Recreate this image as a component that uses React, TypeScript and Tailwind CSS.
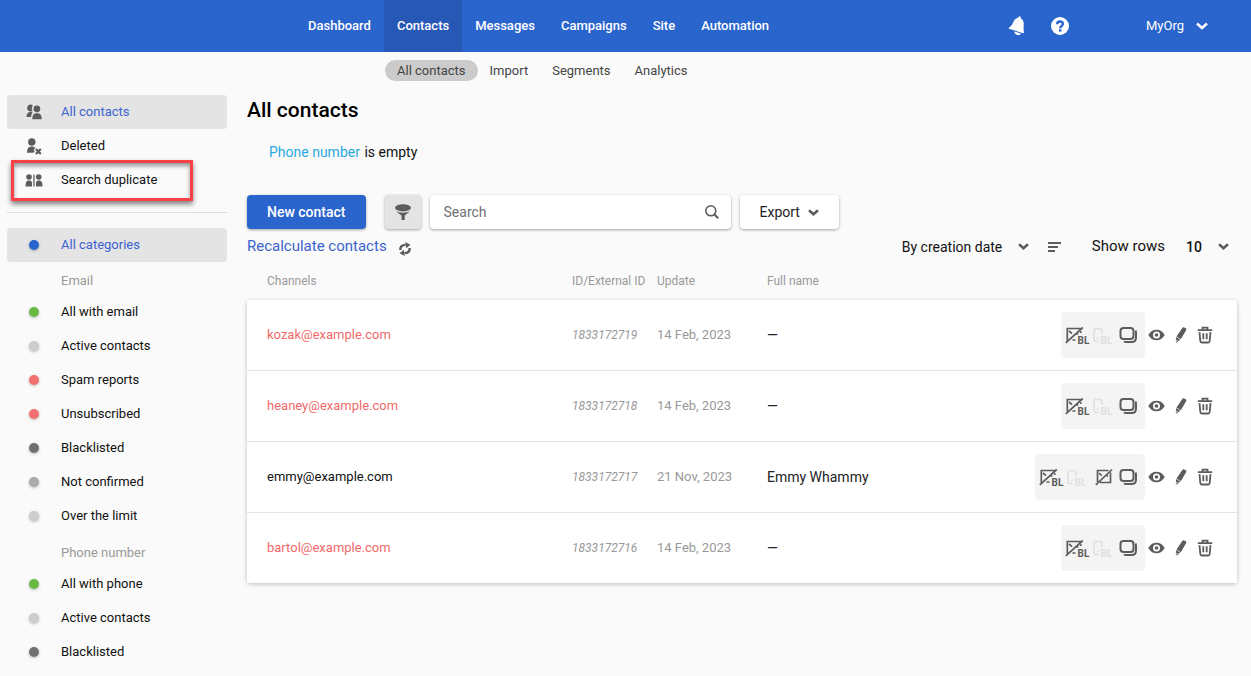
import { useState } from 'react'
import type { ReactNode } from 'react'

type Contact = {
  id: string
  email: string
  updated: string
  name: string
  invalid: boolean
  hasNote: boolean
}

type Category = {
  label: string
  dot: string
}

const navItems = ['Dashboard', 'Contacts', 'Messages', 'Campaigns', 'Site', 'Automation']
const subItems = ['All contacts', 'Import', 'Segments', 'Analytics']

const emailCategories: Category[] = [
  { label: 'All with email', dot: 'bg-[#67bb45]' },
  { label: 'Active contacts', dot: 'bg-[#cccccc]' },
  { label: 'Spam reports', dot: 'bg-[#f37070]' },
  { label: 'Unsubscribed', dot: 'bg-[#f37070]' },
  { label: 'Blacklisted', dot: 'bg-[#707070]' },
  { label: 'Not confirmed', dot: 'bg-[#aaaaaa]' },
  { label: 'Over the limit', dot: 'bg-[#cccccc]' },
]

const phoneCategories: Category[] = [
  { label: 'All with phone', dot: 'bg-[#67bb45]' },
  { label: 'Active contacts', dot: 'bg-[#cccccc]' },
  { label: 'Blacklisted', dot: 'bg-[#707070]' },
]

const contacts: Contact[] = [
  { id: '1833172719', email: 'kozak@example.com', updated: '14 Feb, 2023', name: '', invalid: true, hasNote: false },
  { id: '1833172718', email: 'heaney@example.com', updated: '14 Feb, 2023', name: '', invalid: true, hasNote: false },
  { id: '1833172717', email: 'emmy@example.com', updated: '21 Nov, 2023', name: 'Emmy Whammy', invalid: false, hasNote: true },
  { id: '1833172716', email: 'bartol@example.com', updated: '14 Feb, 2023', name: '', invalid: true, hasNote: false },
]

export default function App() {
  const [search, setSearch] = useState('')

  return (
    <div className="min-h-screen bg-[#fafafa] font-['Roboto',sans-serif] text-[13px] leading-5 text-black">
      <Header />
      <div className="flex items-start pr-3.5 pl-[7px]">
        <Sidebar />
        <main className="ml-5 min-w-0 flex-1 pt-[15px]">
          <h1 className="text-[21px] leading-7 font-medium">All contacts</h1>
          <p className="mt-[18px] pl-[22px] text-sm text-[#111]">
            <a href="#phone" className="mr-px text-[#29a9e0]">Phone number</a> is empty
          </p>

          {/* Toolbar */}
          <div className="mt-[33px] flex h-[34px] items-stretch gap-[9px]">
            <button className="mr-2.5 rounded bg-[#2a64cd] px-5 text-sm font-medium whitespace-nowrap text-white shadow-[0_1px_3px_rgba(0,0,0,0.35)]">
              New contact
            </button>
            <button aria-label="Filter" className="flex w-9 items-center justify-center rounded bg-[#e4e4e4] shadow-[0_1px_3px_rgba(0,0,0,0.35)]">
              <FunnelIcon />
            </button>
            <label className="flex w-[301px] items-center rounded bg-white pr-3 pl-3.5 shadow-[0_1px_3px_rgba(0,0,0,0.35)]">
              <input
                type="text"
                aria-label="Search"
                placeholder="Search"
                value={search}
                onChange={e => setSearch(e.target.value)}
                className="min-w-0 flex-1 text-sm outline-none placeholder:text-[#707070]"
              />
              <SearchIcon />
            </label>
            <button className="flex items-center gap-2 rounded bg-white px-5 text-sm text-[#222] shadow-[0_1px_3px_rgba(0,0,0,0.35)]">
              Export
              <Chevron />
            </button>
          </div>

          {/* Sorting and paging */}
          <div className="mt-[7px] flex items-center justify-between text-sm text-[#111]">
            <a href="#recalculate" className="flex items-center gap-3 text-[15px] text-[#3c62cf]">
              Recalculate contacts
              <RefreshIcon />
            </a>
            <div className="flex items-center pr-2">
              <DropDown label="Sort by" options={['By creation date', 'By update date']} className="w-[127px]" />
              <button aria-label="Sort direction" className="ml-[19px]">
                <SortIcon />
              </button>
              <span className="mr-[21px] ml-[31px] text-[15px]">Show rows</span>
              <DropDown label="Show rows" options={['10', '25', '50']} className="w-[43px] font-medium" />
            </div>
          </div>

          <ContactsTable />
        </main>
      </div>
    </div>
  )
}

function Header() {
  return (
    <>
      <header className="flex h-[52px] bg-[#2a64cd] pl-[295px] font-medium text-white">
        <nav className="flex">
          {navItems.map(item => (
            <a
              key={item}
              href={`#${item}`}
              className={`flex items-center px-[13px] ${item === 'Contacts' ? 'bg-[#2758b6]' : ''}`}
            >
              {item}
            </a>
          ))}
        </nav>
        <div className="ml-auto flex items-center pr-[43px]">
          <button aria-label="Notifications" className="mr-[25px]">
            <BellIcon />
          </button>
          <button aria-label="Help" className="mr-[77px]">
            <HelpIcon />
          </button>
          <button className="flex items-center gap-3 font-normal">
            MyOrg
            <svg width="12" height="8" viewBox="0 0 12 8" fill="none" stroke="currentColor" strokeWidth="2.6">
              <path d="M1 1.5 6 6l5-4.500" />
            </svg>
          </button>
        </div>
      </header>
      <nav className="flex pt-2 pl-[385px] text-[#444]">
        {subItems.map(item => (
          <a
            key={item}
            href={`#${item}`}
            className={`rounded-full px-3 leading-[21px] ${item === 'All contacts' ? 'bg-[#cbcbcb]' : ''}`}
          >
            {item}
          </a>
        ))}
      </nav>
    </>
  )
}

function Sidebar() {
  return (
    <aside className="w-[220px] shrink-0 pt-3.5">
      <SideRow label="All contacts" active icon={<PeopleIcon />} />
      <SideRow label="Deleted" icon={<PersonRemoveIcon />} />
      <div className="relative">
        <SideRow label="Search duplicate" icon={<DuplicateIcon />} />
        <div className="pointer-events-none absolute -top-[3px] left-1 h-[41px] w-[182px] border-3 border-[#fa4145] shadow-[0_3px_5px_rgba(0,0,0,0.5),inset_0_3px_4px_rgba(0,0,0,0.4)]" />
      </div>
      <hr className="mt-[15px] mb-[15px] border-[#dedede]" />
      <SideRow label="All categories" active icon={<Dot color="bg-[#2a64cd]" />} />
      <SideHeading>Email</SideHeading>
      <div className="pb-px">
        {emailCategories.map(c => (
          <SideRow key={c.label} label={c.label} icon={<Dot color={c.dot} />} />
        ))}
      </div>
      <SideHeading>Phone number</SideHeading>
      {phoneCategories.map(c => (
        <SideRow key={c.label} label={c.label} icon={<Dot color={c.dot} />} />
      ))}
    </aside>
  )
}

function SideRow({ label, icon, active = false }: { label: string; icon: ReactNode; active?: boolean }) {
  return (
    <a
      href={`#${label}`}
      className={`flex h-[34px] items-center rounded ${active ? 'bg-[#e4e4e4] text-[#3c62cf]' : 'text-[#111]'}`}
    >
      <span className="flex w-[54px] justify-center text-[#5c5c5c]">{icon}</span>
      {label}
    </a>
  )
}

function SideHeading({ children }: { children: ReactNode }) {
  return <h2 className="pt-[9px] pb-1 pl-[54px] text-[#999]">{children}</h2>
}

function Dot({ color }: { color: string }) {
  return <span className={`size-2.5 rounded-full shadow-[0_1px_3px_rgba(0,0,0,0.25)] ${color}`} />
}

function DropDown({ label, options, className }: { label: string; options: string[]; className: string }) {
  return (
    <span className="relative flex items-center">
      <select aria-label={label} className={`appearance-none outline-none ${className}`}>
        {options.map(o => (
          <option key={o}>{o}</option>
        ))}
      </select>
      <span className="pointer-events-none absolute right-0">
        <Chevron />
      </span>
    </span>
  )
}

function ContactsTable() {
  return (
    <table className="mt-[11px] w-full table-fixed border-separate border-spacing-0 text-left">
      <thead className="text-xs text-[#999]">
        <tr className="h-8">
          <th className="w-[305px] pb-1.5 pl-5 font-normal">Channels</th>
          <th className="w-[97px] pb-1.5 pl-5 font-normal whitespace-nowrap">ID/External ID</th>
          <th className="w-[98px] pb-1.5 pl-2 font-normal">Update</th>
          <th className="pb-1.5 pl-5 font-normal">Full name</th>
          <th className="w-[220px]" aria-label="Actions" />
        </tr>
      </thead>
      <tbody className="rounded bg-white shadow-[0_1px_4px_rgba(0,0,0,0.25)]">
        {contacts.map((c, i) => (
          <tr
            key={c.id}
            className={i < contacts.length - 1 ? 'h-[71px] *:border-b *:border-[#e4e4e4]' : 'h-[70px]'}
          >
            <td className="pl-5">
              <a href={`#${c.id}`} className={c.invalid ? 'text-[#f16a6a]' : 'text-[#111]'}>{c.email}</a>
            </td>
            <td className="pl-5 text-xs text-[#999] italic">{c.id}</td>
            <td className="pl-2 whitespace-nowrap text-[#999]">{c.updated}</td>
            <td className="pl-5 text-sm text-[#222]">{c.name || '—'}</td>
            <td className="pr-6">
              <div className="flex items-center justify-end text-[#5c5c5c]">
                <div className="flex h-[46px] items-center rounded bg-[#f4f4f4] px-1">
                  <MailBlockedIcon />
                  <PhoneBlockedIcon />
                  {c.hasNote && <MailOffIcon />}
                  <CopiesIcon />
                </div>
                <button aria-label={`View ${c.email}`} className="ml-[3px]">
                  <EyeIcon />
                </button>
                <button aria-label={`Edit ${c.email}`} className="ml-2.5">
                  <PencilIcon />
                </button>
                <button aria-label={`Delete ${c.email}`} className="ml-2.5">
                  <TrashIcon />
                </button>
              </div>
            </td>
          </tr>
        ))}
      </tbody>
    </table>
  )
}

/* Icons */

function Chevron() {
  return (
    <svg width="11" height="7" viewBox="0 0 11 7" fill="none" stroke="#5c5c5c" strokeWidth="2.5">
      <path d="M1 1.3 5.5 5.3 10 1.3" />
    </svg>
  )
}

function BellIcon() {
  return (
    <svg width="18" height="20" viewBox="0 0 18 20" fill="currentColor">
      <path d="M10.3 1.6 11.4.3l1.3.4.1 1.700c2 1 3 2.800 2.900 5.400-.1 3.600-.3 5.900.3 8.600l-.7.8L.900 12.800l.1-1.300c2.200-1.200 3.200-2.700 4.200-5.200C6.200 3.700 7.700 2.200 10.300 1.600Z" />
      <path d="m6.200 15.500 6.800 1.900c-.9 1.500-2.100 2-3.700 1.600-1.700-.5-2.800-1.600-3.100-3.500Z" />
    </svg>
  )
}

function HelpIcon() {
  return (
    <svg width="18" height="18" viewBox="0 0 18 18">
      <circle cx="9" cy="9" r="9" fill="currentColor" />
      <path d="M6.1 7.200C6.100 5.400 7.300 4.500 9 4.500s2.900.9 2.900 2.500c0 2-2.700 2-2.700 4.200" fill="none" stroke="#2a64cd" strokeWidth="2.300" />
      <rect x="8" y="12.200" width="2.400" height="2.400" fill="#2a64cd" />
    </svg>
  )
}

function PeopleIcon() {
  return (
    <svg width="16" height="16" viewBox="0 0 16 16" fill="currentColor">
      <path d="M4.600.5a3.500 3.500 0 0 1 2.300.9 4.600 4.600 0 0 0-.3 5.500A3.500 3.500 0 1 1 4.600.5Z" />
      <path d="M.5 13c0-3 1.500-4.900 4-4.900h2.300C5.700 9.300 5.200 11 5.100 13H.5Z" />
      <circle cx="10.900" cy="4.800" r="3.400" />
      <path d="M6.300 15.200c0-3.900 1.200-6 4.700-6s4.700 2.100 4.700 6H6.300Z" />
    </svg>
  )
}

function PersonRemoveIcon() {
  return (
    <svg width="16" height="17" viewBox="0 0 16 17" fill="currentColor">
      <circle cx="5.800" cy="4" r="3.700" />
      <path d="M1 14.800c0-4.300 1.500-6.300 4.800-6.300 1.700 0 2.900.5 3.600 1.600L7.500 11.700l1.300 1.600-1.300 1.500H1Z" />
      <path d="m9.800 11 5 5m0-5-5 5" stroke="currentColor" strokeWidth="2.300" />
    </svg>
  )
}

function DuplicateIcon() {
  return (
    <svg width="18" height="13" viewBox="0 0 18 13" fill="currentColor">
      <circle cx="4" cy="3" r="2.800" />
      <path d="M.5 12.500c0-4.200 1-6 3.500-6s3 1.200 3 3v3H.5ZM8.300.5h1.300v12H8.300z" />
      <circle cx="13.700" cy="3" r="2.800" />
      <path d="M17.500 12.500c0-4.200-1-6-3.500-6s-3 1.200-3 3v3h6.500Z" />
    </svg>
  )
}

function FunnelIcon() {
  return (
    <svg width="18" height="18" viewBox="0 0 18 18" fill="#5c5c5c">
      <ellipse cx="9" cy="4.800" rx="8" ry="3.600" />
      <path d="M2 8.300c3.500 1.900 10.500 1.900 14 0l-5.300 4.200V17H7.500v-4.500L2 8.300Z" />
    </svg>
  )
}

function SearchIcon() {
  return (
    <svg width="14" height="14" viewBox="0 0 14 14" fill="none" stroke="#5c5c5c">
      <circle cx="5.800" cy="5.800" r="5" strokeWidth="1.600" />
      <path d="m9.500 9.500 3.700 3.700" strokeWidth="2" />
    </svg>
  )
}

function RefreshIcon() {
  return (
    <svg width="12" height="14" viewBox="0 0 12 14" className="mt-1" fill="none" stroke="#5c5c5c" strokeWidth="2.400">
      <path d="M1.300 8C1.300 4.900 3.300 2.900 6.500 2.900" />
      <path d="M10.700 6c0 3.100-2 5.100-5.200 5.100" />
      <path d="M6.200 0 11.500 2.800 7.200 6.200ZM5.800 14 .5 11.200l4.300-3.400Z" fill="#5c5c5c" stroke="none" />
    </svg>
  )
}

function SortIcon() {
  return (
    <svg width="13" height="10" viewBox="0 0 13 10" fill="#5c5c5c">
      <path d="M0 0h13v2H0zM0 4h10v2H0zM0 8h7v2H0z" />
    </svg>
  )
}

function MailBlockedIcon() {
  return (
    <svg width="27" height="20" viewBox="0 0 27 20" fill="none" stroke="currentColor" strokeWidth="1.700">
      <path d="M2.300 15.500V3.500H15.800M.8 17.800 17.800 2.500M4 6l3 2.600M11.500 9h1.800M15.800 6.300v1.700M7.500 15H10.500" />
      <text x="12.500" y="19" fontSize="10" fontWeight="700" fill="currentColor" stroke="none">BL</text>
    </svg>
  )
}

function PhoneBlockedIcon() {
  return (
    <svg width="22" height="20" viewBox="0 0 22 20" fill="none" stroke="#dfdfdf" strokeWidth="1.600">
      <path d="M10 9V5.500C10 4 9.500 3.500 8 3.500H4C2.500 3.500 2 4 2 5.500V14.500c0 1.500.5 2 2 2H6.500M5 13.300h1.800" />
      <text x="8.500" y="19" fontSize="10" fontWeight="700" fill="#dfdfdf" stroke="none">BL</text>
    </svg>
  )
}

function MailOffIcon() {
  return (
    <svg width="26" height="20" viewBox="0 0 26 20" fill="none" stroke="currentColor" strokeWidth="1.700">
      <path d="M9.500 15V3.500H20.500M22.500 5.500v10H12M7.800 17.800 24 2.500M11 6l2.800 2.600M18.500 9.300l1.500-1" />
    </svg>
  )
}

function CopiesIcon() {
  return (
    <svg width="27" height="20" viewBox="0 0 27 20" fill="none" stroke="currentColor">
      <rect x="6.500" y="3" width="13" height="11" rx="3" strokeWidth="2" />
      <path d="M21.500 5.500c.4.700.5 1.400.5 2.300v4.700c0 3-1.500 4.500-4.500 4.500h-5c-1.200 0-2-.1-2.700-.5" strokeWidth="2" />
    </svg>
  )
}

function EyeIcon() {
  return (
    <svg width="17" height="12" viewBox="0 0 17 12">
      <path d="M.3 6C2.300 2.500 5 .8 8.500.8s6.200 1.700 8.200 5.200c-2 3.500-4.700 5.200-8.200 5.200S2.300 9.500.3 6Z" fill="currentColor" />
      <circle cx="8.500" cy="6" r="3.500" fill="#fff" />
      <circle cx="8.500" cy="6" r="1.800" fill="currentColor" />
    </svg>
  )
}

function PencilIcon() {
  return (
    <svg width="12" height="16" viewBox="0 0 12 16" fill="currentColor">
      <path d="M7.300.9C7.800.2 8.500 0 9.200.4l1.500.9c.7.4.8 1.200.4 1.900L5.800 12.200 1.500 9.500 7.300.9Z" />
      <path d="m1.200 10 4 2.600-3.400 2.800-1-.6.400-4.800Z" />
      <path d="m1.500 12.800 1.400.9-1.200.9-.4-.2.200-1.600Z" fill="#fff" />
    </svg>
  )
}

function TrashIcon() {
  return (
    <svg width="16" height="18" viewBox="0 0 16 18" fill="none" stroke="currentColor" strokeWidth="1.800">
      <path d="M.8 4.200h14.400M5.500 4V1.700h5V4M2.500 6.200 3.300 15c.1 1 .5 1.500 1.500 1.500h6.400c1 0 1.400-.5 1.500-1.500l.8-8.800M6.300 7.300v6M9.700 7.300v6" />
    </svg>
  )
}
